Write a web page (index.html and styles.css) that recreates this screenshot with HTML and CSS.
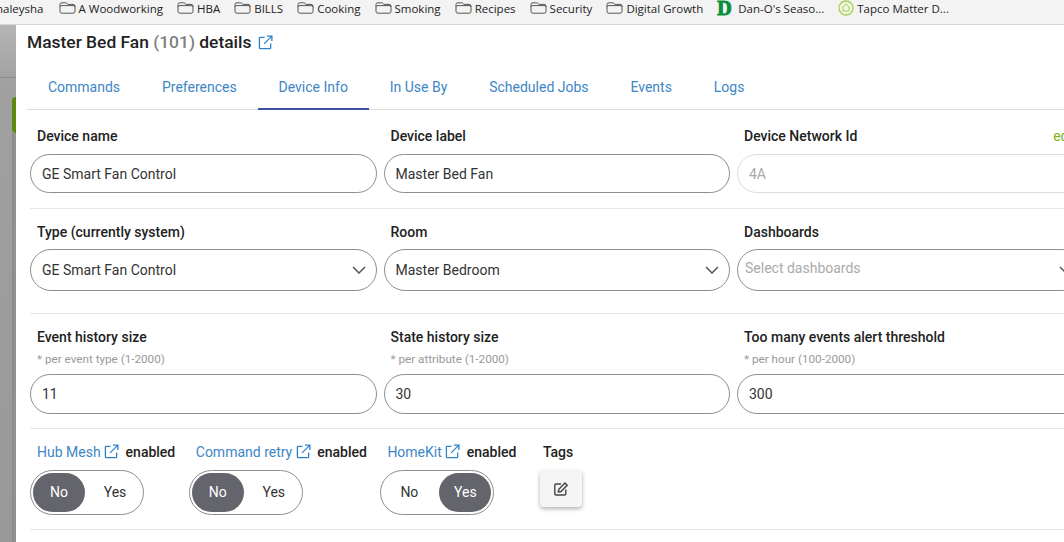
FILE: index.html
```html
<!DOCTYPE html>
<html lang="en">
<head>
    <meta charset="UTF-8">
    <title>Master Bed Fan details</title>
    <link rel="stylesheet" href="styles.css">
</head>
<body>

    <svg class="icon-defs" width="0" height="0">
        <symbol id="folder" viewBox="0 0 17 15" preserveAspectRatio="none">
            <path d="M1 4V3q0-2 2-2h3.500q1 0 1.600 .8L8.800 3H14q2 0 2 2v7q0 2-2 2H3q-2 0-2-2z" fill="none" stroke="#444" stroke-width="1"/>
            <path d="M1 6q0-1.500 2-1.500h11q2 0 2 1.500" fill="none" stroke="#444" stroke-width="1"/>
        </symbol>
        <symbol id="external" viewBox="0 0 16 16">
            <path d="M7 2.500H2.500q-1 0-1 1v10q0 1 1 1h10q1 0 1-1V9" fill="none" stroke="currentColor" stroke-width="1.400"/>
            <path d="M6.500 9.500L14.500 1.500M9.500 1.200h5.300v5.300" fill="none" stroke="currentColor" stroke-width="1.400"/>
        </symbol>
        <symbol id="chevron" viewBox="0 0 14 8">
            <path d="M1 1l6 6 6-6" fill="none" stroke="#555" stroke-width="1.500"/>
        </symbol>
    </svg>

    <!-- Browser bookmarks -->
    <div class="bookmarks">
        <span class="bookmark cut">haleysha</span>
        <span class="bookmark"><svg class="folder"><use href="#folder"/></svg>A Woodworking</span>
        <span class="bookmark"><svg class="folder"><use href="#folder"/></svg>HBA</span>
        <span class="bookmark"><svg class="folder"><use href="#folder"/></svg>BILLS</span>
        <span class="bookmark"><svg class="folder"><use href="#folder"/></svg>Cooking</span>
        <span class="bookmark"><svg class="folder"><use href="#folder"/></svg>Smoking</span>
        <span class="bookmark"><svg class="folder"><use href="#folder"/></svg>Recipes</span>
        <span class="bookmark"><svg class="folder"><use href="#folder"/></svg>Security</span>
        <span class="bookmark"><svg class="folder"><use href="#folder"/></svg>Digital Growth</span>
        <span class="bookmark"><span class="dano">D</span>Dan-O's Seaso...</span>
        <span class="bookmark">
            <svg class="tapco" viewBox="0 0 16 16">
                <circle cx="8" cy="8" r="7" fill="#f0f7df" stroke="#a5cf5a" stroke-width="1.300"/>
                <path d="M4.500 7.500L8 4l3.500 3.500M5 7v4h6V7" fill="none" stroke="#a5cf5a" stroke-width="1"/>
            </svg>Tapco Matter D...</span>
    </div>

    <div class="page">
        <!-- Dimmed page behind the dialog -->
        <div class="backdrop">
            <div class="backdrop-strip"></div>
            <div class="backdrop-line line-top"></div>
            <div class="backdrop-green"></div>
            <div class="backdrop-line short line-a"></div>
            <div class="backdrop-line short line-b"></div>
            <div class="backdrop-line short line-c"></div>
            <div class="backdrop-line short line-d"></div>
            <div class="backdrop-line short line-e"></div>
        </div>

        <div class="dialog">
            <h1 class="title">Master Bed Fan <span class="device-id">(101)</span> details
                <svg class="ext title-ext"><use href="#external"/></svg>
            </h1>

            <div class="tabs">
                <a class="tab">Commands</a>
                <a class="tab">Preferences</a>
                <a class="tab active">Device Info</a>
                <a class="tab">In Use By</a>
                <a class="tab">Scheduled Jobs</a>
                <a class="tab">Events</a>
                <a class="tab">Logs</a>
            </div>

            <div class="form-row row-first">
                <div class="col">
                    <div class="label">Device name</div>
                    <input class="field" type="text" value="GE Smart Fan Control">
                </div>
                <div class="col">
                    <div class="label">Device label</div>
                    <input class="field" type="text" value="Master Bed Fan">
                </div>
                <div class="col">
                    <div class="label label-split">Device Network Id <a class="edit">edit</a></div>
                    <input class="field disabled" type="text" value="4A" disabled>
                </div>
            </div>

            <div class="form-row row-second">
                <div class="col">
                    <div class="label">Type (currently system)</div>
                    <div class="field select">GE Smart Fan Control <svg class="chevron"><use href="#chevron"/></svg></div>
                </div>
                <div class="col">
                    <div class="label">Room</div>
                    <div class="field select">Master Bedroom <svg class="chevron"><use href="#chevron"/></svg></div>
                </div>
                <div class="col">
                    <div class="label">Dashboards</div>
                    <div class="field select placeholder"><span class="placeholder-text">Select dashboards</span> <svg class="chevron"><use href="#chevron"/></svg></div>
                </div>
            </div>

            <div class="form-row">
                <div class="col">
                    <div class="label">Event history size</div>
                    <div class="hint">* per event type (1-2000)</div>
                    <input class="field" type="text" value="11">
                </div>
                <div class="col">
                    <div class="label">State history size</div>
                    <div class="hint">* per attribute (1-2000)</div>
                    <input class="field" type="text" value="30">
                </div>
                <div class="col">
                    <div class="label">Too many events alert threshold</div>
                    <div class="hint">* per hour (100-2000)</div>
                    <input class="field" type="text" value="300">
                </div>
            </div>

            <div class="toggle-row">
                <div class="toggle-group">
                    <div class="label"><a class="link">Hub Mesh <svg class="ext"><use href="#external"/></svg></a> enabled</div>
                    <div class="toggle"><span class="knob on">No</span><span class="knob">Yes</span></div>
                </div>
                <div class="toggle-group">
                    <div class="label"><a class="link">Command retry <svg class="ext"><use href="#external"/></svg></a> enabled</div>
                    <div class="toggle"><span class="knob on">No</span><span class="knob">Yes</span></div>
                </div>
                <div class="toggle-group">
                    <div class="label"><a class="link">HomeKit <svg class="ext"><use href="#external"/></svg></a> enabled</div>
                    <div class="toggle"><span class="knob">No</span><span class="knob on">Yes</span></div>
                </div>
                <div class="toggle-group tags">
                    <div class="label">Tags</div>
                    <button class="tag-btn">
                        <svg class="pencil" viewBox="0 0 16 16">
                            <path d="M8 3H3q-1.200 0-1.200 1.200v8.600Q1.800 14 3 14h8.600q1.200 0 1.200-1.200V8.500" fill="none" stroke="#444" stroke-width="1.400"/>
                            <path d="M5.800 8.300L12 2l2.200 2.200-6.200 6.300-2.700 .5z" fill="none" stroke="#444" stroke-width="1.400"/>
                        </svg>
                    </button>
                </div>
            </div>
        </div>
    </div>

</body>
</html>
```

FILE: styles.css
```css
body {
    margin: 0;
    width: 1064px;
    height: 542px;
    overflow: hidden;
    font-family: Roboto, sans-serif;
    font-size: 14px;
    color: #222;
    background-color: #fff;
}

.icon-defs {
    position: absolute;
}

/* Bookmarks bar */
.bookmarks {
    display: flex;
    align-items: center;
    gap: 11px;
    box-sizing: border-box;
    height: 25px;
    margin-left: -4px;
    padding-bottom: 8px;
    background-color: #f3f3f3;
    border-bottom: 1px solid #d6d6d6;
    font-family: "Open Sans", sans-serif;
    font-size: 11.5px;
    color: #222;
    white-space: nowrap;
    overflow: hidden;
}

.bookmark {
    display: flex;
    align-items: center;
    gap: 3px;
    margin-left: 3px;
}

.bookmark.cut {
    margin-left: 0;
    margin-right: 1px;
}

.folder {
    width: 17px;
    height: 12px;
}

.dano {
    width: 16px;
    margin-right: 2px;
    font-family: "Liberation Serif", serif;
    font-size: 20px;
    font-weight: bold;
    line-height: 16px;
    color: #0a8f3c;
    -webkit-text-stroke: 1px #0a8f3c;
}

.tapco {
    width: 16px;
    height: 16px;
    margin-top: -1px;
}

/* Page */
.page {
    display: flex;
    height: 517px;
}

.backdrop {
    position: relative;
    flex: 0 0 16px;
    background: linear-gradient(180deg, #b4b4b4 0, #a0a0a0 60px, #999 100%);
}

.backdrop-strip {
    position: absolute;
    left: 12px;
    top: 108px;
    bottom: 0;
    width: 4px;
    background-color: #919191;
    border-left: 1px solid #878787;
    box-sizing: border-box;
}

.backdrop-green {
    position: absolute;
    left: 12px;
    top: 72px;
    width: 4px;
    height: 36px;
    background-color: #5c8a0c;
    border-radius: 4px 0 0 4px;
}

.backdrop-line {
    position: absolute;
    left: 0;
    width: 16px;
    height: 1px;
    background-color: #8c8c8c;
}

.backdrop-line.short {
    left: 12px;
    width: 4px;
}

.line-top {
    top: 52px;
}

.line-a {
    top: 120px;
}

.line-b {
    top: 161px;
}

.line-c {
    top: 253px;
}

.line-d {
    top: 359px;
}

.line-e {
    top: 437px;
}

.dialog {
    flex: 1;
    min-width: 0;
    padding: 7px 0 0 11px;
    overflow: hidden;
}

.title {
    margin: 0;
    height: 21px;
    font-size: 17.4px;
    font-weight: 500;
    line-height: 21px;
    color: #222;
    white-space: nowrap;
}

.device-id {
    color: #808080;
}

.ext {
    width: 15px;
    height: 15px;
    color: #2f83c9;
    vertical-align: -2px;
}

.title-ext {
    margin-left: 2px;
}

/* Tabs */
.tabs {
    display: flex;
    margin-top: 12px;
    border-bottom: 1px solid #dcdcdc;
}

.tab {
    padding: 12px 20.95px 11px;
    line-height: 20px;
    color: #3d86c6;
    border-bottom: 2px solid transparent;
    margin-bottom: -1px;
}

.tab.active {
    border-bottom-color: #3f51a5;
}

/* Form */
.form-row {
    display: grid;
    grid-template-columns: repeat(3, 346.5px);
    column-gap: 7px;
    margin-left: 3px;
    padding: 13px 0 14px;
    border-bottom: 1px solid #e8e8e8;
}

.row-first {
    padding-top: 16px;
    padding-bottom: 15px;
}

.row-first .field {
    height: 39px;
}

.row-second {
    padding-bottom: 22px;
}

.label {
    padding-left: 7px;
    font-weight: 500;
    line-height: 20px;
    color: #222;
    white-space: nowrap;
}

.label-split {
    display: flex;
    justify-content: space-between;
}

.edit {
    margin-right: 7px;
    font-weight: 400;
    color: #7cb518;
}

.hint {
    padding: 4px 0 7px 7px;
    font-size: 11.7px;
    line-height: 16px;
    color: #999;
}

.field {
    display: block;
    box-sizing: border-box;
    width: 100%;
    height: 40px;
    margin-top: 8px;
    padding: 0 11px;
    border: 1px solid #8e8e8e;
    border-radius: 20px;
    background-color: #fff;
    font-family: Roboto, sans-serif;
    font-size: 14px;
    color: #333;
    outline: none;
}

.hint + .field {
    margin-top: 0;
}

.field.disabled {
    border-color: #dcdcdc;
    color: #aaa;
}

.select {
    display: flex;
    align-items: center;
    justify-content: space-between;
    height: 42px;
    margin-top: 7px;
    border-radius: 21px;
    padding-right: 10px;
}

.select.placeholder {
    padding-left: 7px;
    color: #aaa;
}

.placeholder-text {
    margin-bottom: 4px;
}

.chevron {
    width: 14px;
    height: 8px;
}

/* Toggles */
.toggle-row {
    display: flex;
    gap: 13.5px;
    margin-left: 3px;
    padding: 13px 0 14px;
    border-bottom: 1px solid #e8e8e8;
}

.link {
    margin-right: 3px;
    font-weight: 400;
    color: #3d86c6;
}

.toggle {
    display: flex;
    justify-content: space-between;
    box-sizing: border-box;
    width: 114px;
    height: 45px;
    margin-top: 8px;
    padding: 2px;
    border: 1px solid #8e8e8e;
    border-radius: 23px;
}

.knob {
    width: 52px;
    line-height: 39px;
    text-align: center;
    border-radius: 20px;
    color: #333;
}

.knob.on {
    background-color: #64646c;
    color: #fff;
}

.tags {
    margin-left: 6px;
}

.tag-btn {
    display: flex;
    align-items: center;
    justify-content: center;
    width: 42px;
    height: 37px;
    margin: 8px 0 0 4px;
    padding: 0;
    border: none;
    border-radius: 4px;
    background-color: #f5f5f5;
    box-shadow: 0 2px 4px rgba(0, 0, 0, 0.3);
}

.pencil {
    width: 16px;
    height: 16px;
}
```
